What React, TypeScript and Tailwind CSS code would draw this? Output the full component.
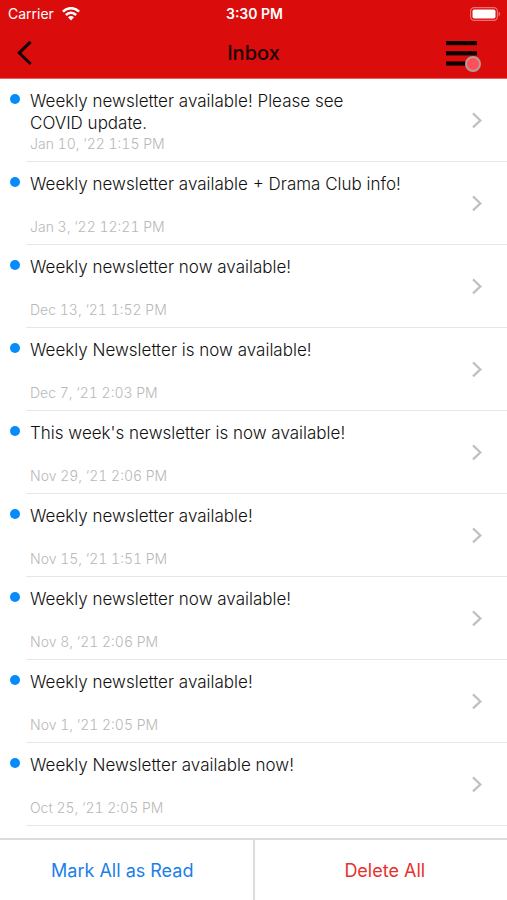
interface Message {
  title: string
  date: string
}

const messages: Message[] = [
  { title: 'Weekly newsletter available! Please see\nCOVID update.', date: 'Jan 10, ‘22 1:15 PM' },
  { title: 'Weekly newsletter available + Drama Club info!', date: 'Jan 3, ‘22 12:21 PM' },
  { title: 'Weekly newsletter now available!', date: 'Dec 13, ‘21 1:52 PM' },
  { title: 'Weekly Newsletter is now available!', date: 'Dec 7, ‘21 2:03 PM' },
  { title: "This week's newsletter is now available!", date: 'Nov 29, ‘21 2:06 PM' },
  { title: 'Weekly newsletter available!', date: 'Nov 15, ‘21 1:51 PM' },
  { title: 'Weekly newsletter now available!', date: 'Nov 8, ‘21 2:06 PM' },
  { title: 'Weekly newsletter available!', date: 'Nov 1, ‘21 2:05 PM' },
  { title: 'Weekly Newsletter available now!', date: 'Oct 25, ‘21 2:05 PM' },
]

const WifiIcon = () => (
  <svg width="18" height="14" viewBox="0 0 18 14" fill="none" stroke="white" strokeWidth="2.5" aria-hidden="true">
    <path d="M0.9 4.6C5.4 0 12.6 0 17.1 4.6" />
    <path d="M3.9 8C6.8 5.1 11.2 5.1 14.1 8" />
    <path d="M9 13.4L6 10.3C7.7 8.7 10.3 8.7 12 10.3Z" fill="white" stroke="none" />
  </svg>
)

const BatteryIcon = () => (
  <svg width="31" height="14" viewBox="0 0 31 14" fill="none" aria-hidden="true">
    <rect x="0.6" y="0.6" width="26.8" height="12.8" rx="3.6" stroke="#ee7070" strokeWidth="1.2" />
    <rect x="2.5" y="2.5" width="23" height="9" rx="1.8" fill="white" />
    <path d="M28.6 4.8C30.6 5.4 30.6 8.6 28.6 9.2Z" fill="#ee7070" />
  </svg>
)

const StatusBar = () => (
  <div className="grid grid-cols-3 items-center h-7 pl-2 pr-1.5 text-white text-sm">
    <div className="flex items-center gap-2">
      <span>Carrier</span>
      <WifiIcon />
    </div>
    <span className="text-center font-semibold">3:30 PM</span>
    <div className="flex justify-end">
      <BatteryIcon />
    </div>
  </div>
)

const Header = () => (
  <header className="shrink-0 bg-[#db0c0c] border-b border-[#f06060]">
    <StatusBar />
    <div className="grid grid-cols-[1fr_auto_1fr] items-center h-[50px] pl-4 pr-[30px]">
      <button type="button" aria-label="Back" className="justify-self-start">
        <svg width="18" height="26" viewBox="0 0 18 26" fill="none" stroke="#140000" strokeWidth="3" aria-hidden="true">
          <path d="M14.6 1.8L3.2 12.8L14.6 24" />
        </svg>
      </button>
      <h1 className="pl-3.5 text-center text-xl leading-6 font-medium text-[#1a0000]">Inbox</h1>
      <button type="button" aria-label="Menu" className="relative justify-self-end">
        <svg width="31" height="26" viewBox="0 0 31 26" fill="#0c0000" aria-hidden="true">
          <rect y="1" width="31" height="4.2" />
          <rect y="11.2" width="31" height="4.2" />
          <rect y="21.4" width="31" height="4.2" />
        </svg>
        <span className="absolute -right-1 -bottom-1.5 size-4 rounded-full border-2 border-[#b09c9c] bg-[#ff5058]" />
      </button>
    </div>
  </header>
)

const MessageRow = ({ title, date }: Message) => (
  <li>
    <a href="#" className="flex pl-2.5">
      <span className="mt-[15px] mr-1.5 size-2.5 shrink-0 rounded-full bg-[#058cfa]" />
      <span className="flex flex-1 items-center border-b border-[#e6e6e6] pl-1 pr-6">
        <span className="flex flex-1 flex-col pt-[11px] pb-[7px] pr-12">
          <span className="min-h-11 text-[17px] leading-[22px] font-light whitespace-pre-line text-[#111]">{title}</span>
          <span className="text-sm leading-5 font-light tabular-nums text-[#b8b8b8]">{date}</span>
        </span>
        <svg width="12" height="18" viewBox="0 0 12 18" fill="none" stroke="#c0c0c0" strokeWidth="2.2" aria-hidden="true">
          <path d="M2 2.4L9.4 9.4L2 16.4" />
        </svg>
      </span>
    </a>
  </li>
)

export default function App() {
  return (
    <div className="flex h-screen flex-col bg-white font-['Inter',Arial,sans-serif]">
      <Header />
      <ul className="flex-1 overflow-y-auto">
        {messages.map((message) => (
          <MessageRow key={message.date} {...message} />
        ))}
      </ul>
      <footer className="flex h-[62px] shrink-0 border-t-2 border-[#dcdcdc] text-lg">
        <button type="button" className="flex-1 pt-0.5 pr-2 text-[#1a7fe8]">
          Mark All as Read
        </button>
        <button type="button" className="flex-1 border-l-2 border-[#dcdcdc] pt-0.5 pl-2 text-[#e5322d]">
          Delete All
        </button>
      </footer>
    </div>
  )
}
